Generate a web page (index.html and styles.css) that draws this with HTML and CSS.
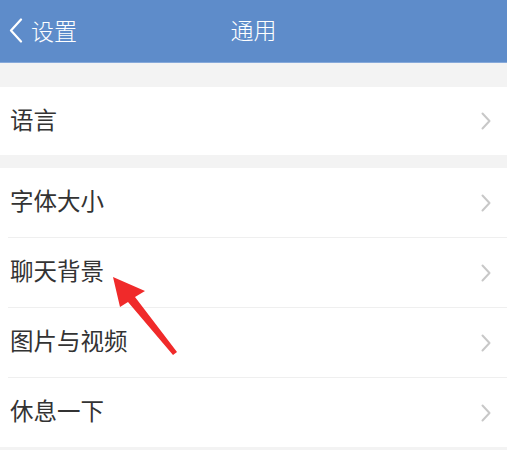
FILE: index.html
```html
<!DOCTYPE html>
<html lang="zh-CN">
<head>
    <meta charset="UTF-8">
    <meta name="viewport" content="width=device-width, initial-scale=1.0">
    <title>通用</title>
    <link rel="stylesheet" href="styles.css">
</head>
<body>
    <div class="page">
        <div class="topbar">
            <div class="back">
                <svg class="back-icon" width="16" height="26" viewBox="0 0 16 26">
                    <path d="M13 1.5 L3 12.5 L13 23.5" fill="none" stroke="#fff" stroke-width="2.2" stroke-linecap="round" stroke-linejoin="round"/>
                </svg>
                <span>设置</span>
            </div>
            <div class="title">通用</div>
        </div>

        <div class="group first">
            <div class="row"><span class="label">语言</span><svg class="chev" width="10" height="18" viewBox="0 0 10 18"><path d="M1.5 1.5 L8.5 9 L1.5 16.5" /></svg></div>
        </div>

        <div class="group">
            <div class="row"><span class="label">字体大小</span><svg class="chev" width="10" height="18" viewBox="0 0 10 18"><path d="M1.5 1.5 L8.5 9 L1.5 16.5" /></svg></div>
            <div class="row"><span class="label">聊天背景</span><svg class="chev" width="10" height="18" viewBox="0 0 10 18"><path d="M1.5 1.5 L8.5 9 L1.5 16.5" /></svg></div>
            <div class="row"><span class="label">图片与视频</span><svg class="chev" width="10" height="18" viewBox="0 0 10 18"><path d="M1.5 1.5 L8.5 9 L1.5 16.5" /></svg></div>
            <div class="row"><span class="label">休息一下</span><svg class="chev" width="10" height="18" viewBox="0 0 10 18"><path d="M1.5 1.5 L8.5 9 L1.5 16.5" /></svg></div>
        </div>

        <svg class="pointer" width="507" height="450" viewBox="0 0 507 450">
            <polygon points="113,277 145,291 135,297 177,352 173,355 128,302 120,307" fill="#f02a2a"/>
        </svg>
    </div>
</body>
</html>
```

FILE: styles.css
```css
* {
    box-sizing: border-box;
}
body {
    margin: 0;
    background-color: #f3f3f3;
    font-family: "Noto Sans CJK SC", "Noto Sans", sans-serif;
}
.page {
    position: relative;
    width: 507px;
    height: 450px;
    overflow: hidden;
}
.topbar {
    position: relative;
    height: 63px;
    background-color: #5e8cca;
    border-bottom: 1px solid #86a9da;
    display: flex;
    align-items: center;
    justify-content: center;
    color: #fff;
}
.back {
    position: absolute;
    left: 8px;
    top: 0;
    height: 62px;
    display: flex;
    align-items: center;
    gap: 7px;
    font-size: 23px;
    font-weight: 300;
}
.back span {
    margin-top: -3px;
}
.title {
    font-size: 23px;
    font-weight: 300;
    margin-top: -4px;
}
.group {
    background: #fff;
    margin-top: 13px;
}
.group.first {
    margin-top: 24px;
}
.row {
    height: 70px;
    display: flex;
    align-items: center;
    justify-content: space-between;
    margin-left: 8px;
    padding: 0 16px 0 2px;
    border-top: 1px solid #efefef;
    font-size: 23.5px;
    color: #333;
}
.label {
    margin-top: -5px;
}
.row:first-child {
    border-top: none;
    height: 69px;
}
.group.first .row {
    height: 68px;
}
.chev path {
    fill: none;
    stroke: #c8c8c8;
    stroke-width: 2;
    stroke-linecap: round;
    stroke-linejoin: round;
}
.pointer {
    position: absolute;
    left: 0;
    top: 0;
}
```
